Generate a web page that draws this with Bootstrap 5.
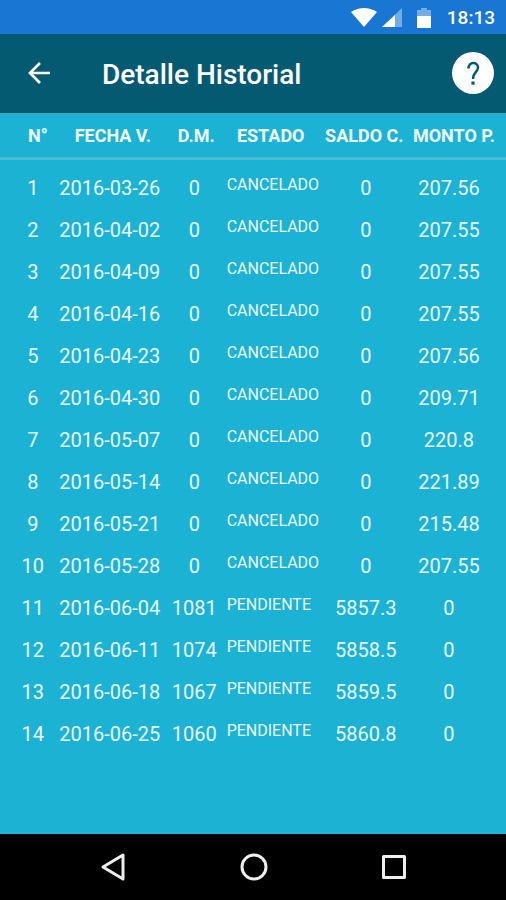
<!DOCTYPE html>
<html lang="es">
<head>
<meta charset="utf-8">
<meta name="viewport" content="width=device-width, initial-scale=1">
<title>Detalle Historial</title>
<link href="https://cdn.jsdelivr.net/npm/bootstrap@5.3.0/dist/css/bootstrap.min.css" rel="stylesheet">
<style>
  body { font-family: Roboto, "Liberation Sans", sans-serif; background: #1cb2d3; }
  .status-bar { height: 34px; background: #1976d2; font-size: 19px; line-height: 24px; font-weight: 500; padding: 2px 11px 0 0; }
  .battery { margin: 0 16px 0 14px; }
  .app-bar { height: 79px; background: #045a70; border-bottom: 1px solid #044b5e; padding: 0 12px 0 20px; }
  .app-title { font-size: 28px; line-height: 36px; font-weight: 500; margin-left: 44px; padding-top: 4px; }
  .icon-btn { background: none; line-height: 0; }
  .help-btn { width: 42px; height: 42px; }
  .history { table-layout: fixed; color: #e8fafe; text-align: center; white-space: nowrap; }
  .history th, .history td { padding: 0; }
  .history thead th { height: 45px; padding-top: 2px; font-size: 18px; line-height: 24px; font-weight: 700; color: #f2fdff; border-bottom: 3px solid #4cb9d5; }
  .history tbody::before { content: ""; display: block; height: 7px; }
  .history tbody td { height: 42px; font-size: 20px; line-height: 24px; vertical-align: middle; }
  .history .c-num { width: 11%; }
  .history .c-date { width: 21%; }
  .history .c-days { width: 12%; }
  .history .c-state { width: 20%; }
  .history .c-balance { width: 17%; }
  .history th.c-num { padding-left: 20px; }
  .history th.c-date, .history th.c-days { padding-left: 8px; }
  .history th.c-state, .history th.c-balance { padding-right: 5px; }
  .history th.c-amount { padding-right: 8px; }
  .history td:nth-child(1) { padding-left: 10px; }
  .history td:nth-child(2) { padding-left: 2px; }
  .history td:nth-child(3) { padding-left: 4px; }
  .history tbody td:nth-child(4) { padding: 0 0 6px 4px; text-align: left; font-size: 16px; line-height: 20px; }
  .history td:nth-child(5) { padding-right: 2px; }
  .history td:nth-child(6) { padding-right: 18px; }
  .nav-keys { height: 66px; background: #000; padding: 0 96px 0 97px; }
</style>
<script src="https://cdn.jsdelivr.net/npm/bootstrap@5.3.0/dist/js/bootstrap.bundle.min.js"></script>
</head>
<body class="d-flex flex-column min-vh-100">
<div class="status-bar d-flex align-items-center justify-content-end text-white">
  <svg width="26" height="20" viewBox="0 0 26 20" aria-hidden="true"><path d="M0 4Q13-4 26 4L13 19Z" fill="#fff"/></svg>
  <svg class="ms-1" width="22" height="20" viewBox="0 0 22 20" aria-hidden="true"><path d="M1 19L21 0V19Z" fill="#75ace5"/><path d="M1 19L14 7V19Z" fill="#fff"/></svg>
  <svg class="battery" width="14" height="20" viewBox="0 0 14 20" aria-hidden="true"><path d="M0 2H4V0H10V2H14V8H0Z" fill="#75ace5"/><path d="M0 8H14V20H0Z" fill="#fff"/></svg>
  <time>18:13</time>
</div>
<header class="app-bar d-flex align-items-center text-white">
  <button type="button" class="icon-btn border-0 text-white px-2 py-0" aria-label="Volver">
    <svg width="22" height="22" viewBox="0 0 22 22" fill="none" stroke="currentColor" stroke-width="2.700"><path d="M23 11H2M12 1L2 11L12 21"/></svg>
  </button>
  <h1 class="app-title mb-0">Detalle Historial</h1>
  <button type="button" class="help-btn icon-btn border-0 p-0 ms-auto" aria-label="Ayuda">
    <svg width="42" height="42" viewBox="0 0 42 42" fill="none"><circle cx="21" cy="21" r="21" fill="#fff"/><path d="M16.500 16.500C16.500 9 26 9.500 26 15.500C26 20 21 20 21 27" stroke="#045a70" stroke-width="2.500"/><path d="M19.400 29.500H22.600V32.700H19.400Z" fill="#045a70"/></svg>
  </button>
</header>
<main class="flex-grow-1">
  <table class="history w-100">
    <thead>
      <tr><th scope="col" class="c-num">N°</th><th scope="col" class="c-date">FECHA V.</th><th scope="col" class="c-days">D.M.</th><th scope="col" class="c-state">ESTADO</th><th scope="col" class="c-balance">SALDO C.</th><th scope="col" class="c-amount">MONTO P.</th></tr>
    </thead>
    <tbody>
      <tr><td>1</td><td>2016-03-26</td><td>0</td><td>CANCELADO</td><td>0</td><td>207.56</td></tr>
      <tr><td>2</td><td>2016-04-02</td><td>0</td><td>CANCELADO</td><td>0</td><td>207.55</td></tr>
      <tr><td>3</td><td>2016-04-09</td><td>0</td><td>CANCELADO</td><td>0</td><td>207.55</td></tr>
      <tr><td>4</td><td>2016-04-16</td><td>0</td><td>CANCELADO</td><td>0</td><td>207.55</td></tr>
      <tr><td>5</td><td>2016-04-23</td><td>0</td><td>CANCELADO</td><td>0</td><td>207.56</td></tr>
      <tr><td>6</td><td>2016-04-30</td><td>0</td><td>CANCELADO</td><td>0</td><td>209.71</td></tr>
      <tr><td>7</td><td>2016-05-07</td><td>0</td><td>CANCELADO</td><td>0</td><td>220.8</td></tr>
      <tr><td>8</td><td>2016-05-14</td><td>0</td><td>CANCELADO</td><td>0</td><td>221.89</td></tr>
      <tr><td>9</td><td>2016-05-21</td><td>0</td><td>CANCELADO</td><td>0</td><td>215.48</td></tr>
      <tr><td>10</td><td>2016-05-28</td><td>0</td><td>CANCELADO</td><td>0</td><td>207.55</td></tr>
      <tr><td>11</td><td>2016-06-04</td><td>1081</td><td>PENDIENTE</td><td>5857.3</td><td>0</td></tr>
      <tr><td>12</td><td>2016-06-11</td><td>1074</td><td>PENDIENTE</td><td>5858.5</td><td>0</td></tr>
      <tr><td>13</td><td>2016-06-18</td><td>1067</td><td>PENDIENTE</td><td>5859.5</td><td>0</td></tr>
      <tr><td>14</td><td>2016-06-25</td><td>1060</td><td>PENDIENTE</td><td>5860.8</td><td>0</td></tr>
    </tbody>
  </table>
</main>
<nav class="nav-keys d-flex align-items-center justify-content-between" aria-label="Sistema">
  <button type="button" class="icon-btn border-0 p-0" aria-label="Atrás"><svg width="32" height="32" viewBox="0 0 32 32" fill="none" stroke="#eee" stroke-width="3" stroke-linejoin="round"><path d="M26 4V28L6 16Z"/></svg></button>
  <button type="button" class="icon-btn border-0 p-0" aria-label="Inicio"><svg width="32" height="32" viewBox="0 0 32 32" fill="none" stroke="#eee" stroke-width="3"><circle cx="16" cy="16" r="12"/></svg></button>
  <button type="button" class="icon-btn border-0 p-0" aria-label="Recientes"><svg width="32" height="32" viewBox="0 0 32 32" fill="none" stroke="#eee" stroke-width="3" stroke-linejoin="round"><path d="M5.500 5.500H26.500V26.500H5.500Z"/></svg></button>
</nav>
</body>
</html>
